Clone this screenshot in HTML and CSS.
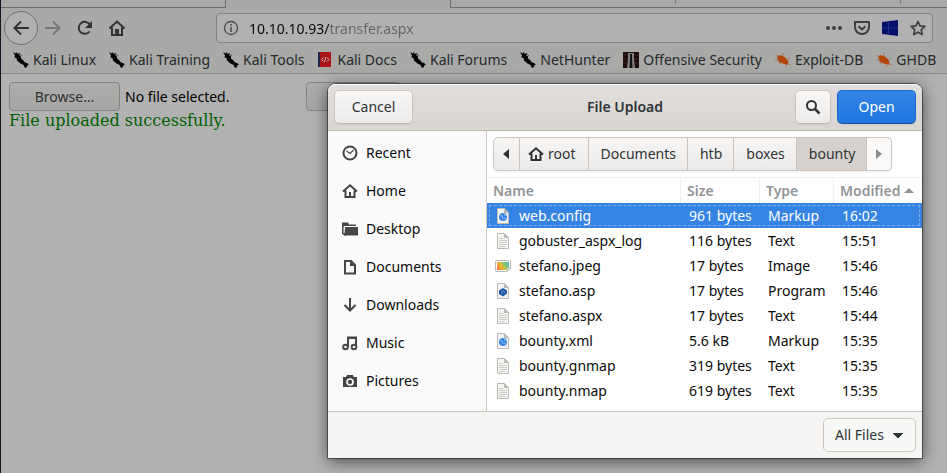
FILE: index.html
```html
<!DOCTYPE html>
<html lang="en">
<head>
<meta charset="utf-8">
<title>File Upload</title>
<link rel="stylesheet" href="styles.css">
</head>
<body>
<svg class="sprite" aria-hidden="true">
  <symbol id="kali" viewBox="0 0 16 16"><path d="M0 0l2.500 1.500L4 0l.5 2L7 1 6 3l2 1.500v2L10 8l2 2.500 2 .5 2 1.500-1.500.5-.5 2-2 1-1.500-3-3-1.500L4 8.500 3.500 6 1.500 5.500 2 3.500z" fill="#050505"/><path d="M6 1.500l3 2.500" stroke="#050505" stroke-width=".6"/></symbol>
  <symbol id="docs" viewBox="0 0 16 16"><path d="M1 0h13v15H1z" fill="#aa1518"/><path d="M1 0h2v15H1z" fill="#1d2448"/><path d="M6.500 5.500L4.500 7.500l2 2M10 5.500l2 2-2 2M9 5l-1.500 5" fill="none" stroke="#c5b5b5"/></symbol>
  <symbol id="offsec" viewBox="0 0 16 16"><path d="M0 0h16v16H0z" fill="#1d0c0c"/><path d="M0 3h16M0 7h16M0 11h16" stroke="#3d2020"/><path d="M5 1h6v6l1 9H4l1-9z" fill="#858080"/><path d="M7 2h2v5l.5 9h-3L7 7z" fill="#151515"/></symbol>
  <symbol id="bug" viewBox="0 0 16 16"><path d="M1 3l4 3M0 8l5 0M4 12l3-3M8 1v5M10 13l1 2M13 7l2-1M14 12l2 1" stroke="#a06a45" stroke-width=".7" fill="none"/><path d="M2 5l2-2 4 1 4 3 1.500 3-.5 3-4-1-5-2z" fill="#b2460b"/></symbol>
  <symbol id="house" viewBox="0 0 16 16"><path d="M1 8.500L8 2.300l7 6.200M3.500 7.500V14h9V7.500" fill="none" stroke="currentColor" stroke-width="2"/><path d="M7 9h2v5H7z" fill="currentColor"/></symbol>
  <symbol id="text" viewBox="0 0 16 16"><path d="M2.500.500h7l4 4v11h-11z" fill="#f4f4f2" stroke="#bcbab5"/><path d="M9 0l5 5H9z" fill="#bcbab5"/><path d="M4 5.500h4M4 7.500h8M4 9.500h8M4 11.500h8M4 13.500h6" stroke="#cfcdc9"/></symbol>
  <symbol id="markup" viewBox="0 0 16 16"><path d="M2.500.500h7l4 4v11h-11z" fill="#f4f4f2" stroke="#bcbab5"/><path d="M9 0l5 5H9z" fill="#bcbab5"/><circle cx="8" cy="9" r="4" fill="#3584e4"/><path d="M5 7l2 1 1 3M9 5.500l1 2 2 0M9 10l2 1" fill="none" stroke="#8fc0f5"/></symbol>
  <symbol id="program" viewBox="0 0 16 16"><path d="M2.500.500h7l4 4v11h-11z" fill="#f4f4f2" stroke="#bcbab5"/><path d="M9 0l5 5H9z" fill="#bcbab5"/><path d="M8 5l4 2.500v3L8 13.500 4 11V7.500z" fill="#1c56a5"/><path d="M6 8l2 3M8 7l2 3" stroke="#6d9ddb"/></symbol>
  <symbol id="image" viewBox="0 0 16 16"><defs><linearGradient id="photo" x1="0" y1="0.700" x2="1" y2="0.300"><stop offset="0" stop-color="#f5793b"/><stop offset=".35" stop-color="#f3b62e"/><stop offset=".7" stop-color="#86c96a"/><stop offset="1" stop-color="#4fb8b8"/></linearGradient></defs><path d="M1.500 2.500h13a1 1 0 011 1V10l-3.500 3.500H1.500a1 1 0 01-1-1v-9a1 1 0 011-1z" fill="#fff" stroke="#bcbab5"/><path d="M2 4h12v6l-2.500 2H2z" fill="url(#photo)"/><path d="M12 13.500V10h3.500z" fill="#eee" stroke="#bcbab5"/></symbol>
</svg>

<div class="browser">
  <div class="tabs"><span class="tab tab-first"></span><span class="tab tab-active"></span><span class="tab tab-mid"></span><span class="tab tab-mid"></span><span class="tab tab-rest"></span></div>
  <nav class="toolbar">
    <button class="back" aria-label="Back"><svg viewBox="0 0 16 16"><path d="M16 8H2M8 1.500L1.500 8 8 14.500" fill="none" stroke="#303336" stroke-width="2"/></svg></button>
    <button class="tool" aria-label="Forward"><svg viewBox="0 0 16 16"><path d="M0 8h14M8 1.500L14.500 8 8 14.500" fill="none" stroke="#777" stroke-width="2"/></svg></button>
    <button class="tool" aria-label="Reload"><svg viewBox="0 0 16 16"><path d="M12.500 11.500A6 6 0 1113 5" fill="none" stroke="#303336" stroke-width="2"/><path d="M15 1v7H8z" fill="#303336"/></svg></button>
    <button class="tool" aria-label="Home page"><svg viewBox="0 0 16 16"><path d="M0.500 8.500L8 1.500l7.500 7M3 7.500V15h10V7.500" fill="none" stroke="#303336" stroke-width="2"/><path d="M6 9h4v5H6z" fill="#303336"/></svg></button>
    <div class="address">
      <svg viewBox="0 0 16 16"><circle cx="8" cy="8" r="6.500" fill="none" stroke="#4b4b4b" stroke-width="1.300"/><path d="M7.200 7h1.600v5H7.200zM7.200 4h1.600v1.700H7.200z" fill="#4b4b4b"/></svg>
      <input class="url" type="text" aria-label="Address" value="10.10.10.93/transfer.aspx">
      <div class="actions">
        <svg viewBox="0 0 16 16"><g fill="#3f3f3f"><circle cx="2" cy="8" r="2"/><circle cx="8" cy="8" r="2"/><circle cx="14" cy="8" r="2"/></g></svg>
        <svg viewBox="0 0 16 16"><path d="M1 2h14v5a7 7 0 01-14 0z" fill="none" stroke="#3f3f3f" stroke-width="2" stroke-linejoin="round"/><path d="M4.500 6.200L8 9.500l3.500-3.300" fill="none" stroke="#3f3f3f" stroke-width="2"/></svg>
        <svg viewBox="0 0 16 16"><path d="M0 2l16-2v16L0 14z" fill="#05106c"/><path d="M6.500 1v14M0 8h16" stroke="#39458e" stroke-width=".6"/></svg>
        <svg viewBox="0 0 16 16"><path d="M8 1.500l2 4.300 4.800.6-3.500 3.300.9 4.800L8 12.200l-4.200 2.300.9-4.800L1.200 6.400 6 5.800z" fill="none" stroke="#3f3f3f" stroke-width="1.700" stroke-linejoin="round"/></svg>
      </div>
    </div>
  </nav>
  <div class="bookmarks">
    <a href="#"><svg><use href="#kali"/></svg>Kali Linux</a>
    <a href="#"><svg><use href="#kali"/></svg>Kali Training</a>
    <a href="#"><svg><use href="#kali"/></svg>Kali Tools</a>
    <a href="#"><svg><use href="#docs"/></svg>Kali Docs</a>
    <a href="#"><svg><use href="#kali"/></svg>Kali Forums</a>
    <a href="#"><svg><use href="#kali"/></svg>NetHunter</a>
    <a href="#"><svg><use href="#offsec"/></svg>Offensive Security</a>
    <a href="#"><svg><use href="#bug"/></svg>Exploit-DB</a>
    <a href="#"><svg><use href="#bug"/></svg>GHDB</a>
  </div>
  <main class="page">
    <form class="upload"><button type="button" class="browse">Browse…</button><span class="chosen">No file selected.</span><button type="button" class="send" aria-label="Upload"></button></form>
    <p class="result">File uploaded successfully.</p>
  </main>
</div>

<section class="dialog" role="dialog" aria-labelledby="title">
  <header class="head">
    <div class="side"><button class="btn cancel">Cancel</button></div>
    <h1 id="title">File Upload</h1>
    <div class="side end">
      <button class="btn search" aria-label="Search"><svg viewBox="0 0 16 16"><circle cx="6.500" cy="6.500" r="4.500" fill="none" stroke="#2e3436" stroke-width="2"/><path d="M10 10l4.500 4.500" stroke="#2e3436" stroke-width="2.500"/></svg></button>
      <button class="btn open">Open</button>
    </div>
  </header>
  <div class="body">
    <nav class="places">
      <a href="#"><svg viewBox="0 0 16 16"><circle cx="8" cy="8" r="6.500" fill="none" stroke="currentColor" stroke-width="2"/><path d="M4.500 6L8 8.500 11.500 5" fill="none" stroke="currentColor" stroke-width="1.200"/></svg>Recent</a>
      <a href="#"><svg><use href="#house"/></svg>Home</a>
      <a href="#"><svg viewBox="0 0 16 16"><path d="M0 1.500h6l1 2h7V5H2.500L1.500 6v7H0z" fill="currentColor"/><path d="M3 6h13v8.500H2.500z" fill="currentColor"/><path d="M0 12l2 2.500h2V12z" fill="currentColor"/></svg>Desktop</a>
      <a href="#"><svg viewBox="0 0 16 16"><path d="M3 2h6l4 4v8.500H3z" fill="none" stroke="currentColor" stroke-width="2"/><path d="M8 2v5h5z" fill="currentColor"/></svg>Documents</a>
      <a href="#"><svg viewBox="0 0 16 16"><path d="M8 1v12M2.500 8L8 13.500 13.500 8" fill="none" stroke="currentColor" stroke-width="2"/></svg>Downloads</a>
      <a href="#"><svg viewBox="0 0 16 16"><path d="M6 12V2.500h8V11" fill="none" stroke="currentColor" stroke-width="2"/><path d="M5 2h10v2H5z" fill="currentColor"/><circle cx="3.500" cy="12" r="2.300" fill="none" stroke="currentColor" stroke-width="2"/><circle cx="12" cy="12" r="2.300" fill="none" stroke="currentColor" stroke-width="2"/></svg>Music</a>
      <a href="#"><svg viewBox="0 0 16 16"><path d="M1 4h3l1-2h6l1 2h3v10H1z" fill="currentColor"/><circle cx="8" cy="9" r="3" fill="none" stroke="#fafafa" stroke-width="1.700"/></svg>Pictures</a>
    </nav>
    <div class="files">
      <div class="path">
        <button class="arrow" aria-label="Back"><svg viewBox="0 0 16 16"><path d="M11 3v10L5 8z" fill="#2e3436"/></svg></button>
        <button><svg><use href="#house"/></svg>root</button>
        <button>Documents</button>
        <button>htb</button>
        <button>boxes</button>
        <button class="current">bounty</button>
        <button class="arrow off" aria-label="Forward"><svg viewBox="0 0 16 16"><path d="M5 3v10l6-5z" fill="#8b8e8f"/></svg></button>
      </div>
      <table>
        <colgroup><col><col class="c-size"><col class="c-type"><col class="c-time"></colgroup>
        <thead><tr><th>Name</th><th>Size</th><th>Type</th><th>Modified<svg class="sort" viewBox="0 0 10 5"><path d="M0 5l5-5 5 5z" fill="#929595"/></svg></th></tr></thead>
        <tbody>
          <tr class="selected"><td><svg><use href="#markup"/></svg>web.config</td><td>961 bytes</td><td>Markup</td><td>16:02</td></tr>
          <tr><td><svg><use href="#text"/></svg>gobuster_aspx_log</td><td>116 bytes</td><td>Text</td><td>15:51</td></tr>
          <tr><td><svg><use href="#image"/></svg>stefano.jpeg</td><td>17 bytes</td><td>Image</td><td>15:46</td></tr>
          <tr><td><svg><use href="#program"/></svg>stefano.asp</td><td>17 bytes</td><td>Program</td><td>15:46</td></tr>
          <tr><td><svg><use href="#text"/></svg>stefano.aspx</td><td>17 bytes</td><td>Text</td><td>15:44</td></tr>
          <tr><td><svg><use href="#markup"/></svg>bounty.xml</td><td>5.6 kB</td><td>Markup</td><td>15:35</td></tr>
          <tr><td><svg><use href="#text"/></svg>bounty.gnmap</td><td>319 bytes</td><td>Text</td><td>15:35</td></tr>
          <tr><td><svg><use href="#text"/></svg>bounty.nmap</td><td>619 bytes</td><td>Text</td><td>15:35</td></tr>
        </tbody>
      </table>
    </div>
  </div>
  <footer class="foot"><select class="filter" aria-label="File type"><option>All Files</option></select></footer>
</section>
</body>
</html>
```
FILE: styles.css
```css
* { box-sizing: border-box; }
body, button, input, select { font: 14px/20px "Noto Sans", "Open Sans", sans-serif; }
body { margin: 0; height: 100vh; overflow: hidden; background: #b1b1b1; color: #000; }
button { margin: 0; padding: 0; color: #2e3436; }
a { color: inherit; text-decoration: none; }
svg { width: 16px; height: 16px; flex: none; }
.sprite { position: absolute; width: 0; height: 0; }

.browser { min-height: 100vh; border-left: 1px solid #10151f; }
.tabs { display: flex; height: 8px; background: #a9a9a7; }
.tab { border-bottom: 1px solid #6b6c6c; }
.tab-first { width: 225px; border-right: 1px solid #6b6c6c; }
.tab-active { width: 225px; border-right: 1px solid #6b6c6c; border-bottom: 0; }
.tab-mid { width: 225px; background: linear-gradient(#7c7c7c, #7c7c7c) right top / 1px 4px no-repeat; }
.tab-rest { flex: 1; }
.toolbar { display: flex; align-items: center; height: 42px; padding: 0 14px 2px 3px; background: #a9a9a8; }
.back { display: flex; align-items: center; justify-content: center; width: 34px; height: 34px; border: 1px solid #717171; border-radius: 50%; background: #b0b0b0; margin-right: 7px; }
.tool { display: flex; padding: 0; border: 0; background: none; margin-right: 16px; }
.tool:nth-of-type(4) { margin-right: 91px; }
.address { display: flex; align-items: center; flex: 1; height: 30px; padding: 0 6px; border: 1px solid #858585; border-radius: 4px; background: #b1b1b1; }
.url { flex: 1; min-width: 0; height: 24px; margin-left: 10px; padding: 0; border: 0; color: transparent; background: linear-gradient(90deg, #080808 80px, #656565 80px); -webkit-background-clip: text; background-clip: text; }
.actions { display: flex; gap: 12px; }
.bookmarks { display: flex; gap: 13px; height: 24px; padding-left: 12px; overflow: hidden; background: #a9a9a8; border-bottom: 1px solid #838383; color: #25292b; white-space: nowrap; }
.bookmarks a { display: flex; align-items: center; gap: 4px; height: 20px; }
.page { padding: 8px; }
.upload { display: flex; align-items: center; }
.browse, .send { height: 29px; border: 1px solid #858481; border-radius: 4px; background: linear-gradient(#aeadac, #a7a6a4); }
.browse { width: 111px; margin-right: 5px; }
.chosen { width: 181px; }
.send { width: 95px; }
.result { margin: 0; font: 16px/19px "DejaVu Serif", serif; color: #006100; }

.dialog { position: absolute; top: 84px; left: 328px; right: 25px; border-radius: 8px 8px 0 0; background: #f6f5f4; box-shadow: 0 0 0 1px rgba(0,0,0,.45), 0 3px 16px rgba(0,0,0,.6); color: #0b0b0b; }
.head { display: flex; align-items: center; height: 47px; padding: 0 6px; border-bottom: 1px solid #bfb8b1; border-radius: 8px 8px 0 0; background: linear-gradient(#e1dedb, #dad6d2); box-shadow: inset 0 1px #fbfafa; }
.head h1 { margin: 0; font-size: 14px; line-height: 20px; font-weight: 600; color: #2e3436; }
.side { display: flex; flex: 1; gap: 6px; }
.end { justify-content: flex-end; }
.btn { display: flex; align-items: center; justify-content: center; height: 34px; border: 1px solid #cdc7c2; border-bottom-color: #bfb8b1; border-radius: 5px; background: linear-gradient(#f8f7f6, #edebe9); box-shadow: 0 1px 2px rgba(0,0,0,.07); }
.cancel { width: 79px; }
.search { width: 36px; }
.open { width: 79px; border-color: #1b6acb #1b6acb #15539e; color: #fff; background: linear-gradient(#3584e4, #1f76e1); }
.body { display: flex; height: 281px; border-bottom: 1px solid #c9c5be; }
.places { width: 159px; padding-top: 3px; background: #fafafa; border-right: 1px solid #cdc7c2; }
.places a { display: flex; align-items: center; gap: 8px; height: 38px; padding-left: 14px; }
.places svg { color: #464646; }
.files { flex: 1; min-width: 0; background: #fff; }
.path { display: flex; height: 47px; padding: 6px 6px; border-bottom: 1px solid #f0f0ef; }
.path button { display: flex; align-items: center; gap: 4px; height: 34px; padding: 0 11px 0 12px; border: 1px solid #cdc7c2; border-left-width: 0; background: linear-gradient(#f7f6f5, #eceae8); box-shadow: 0 1px 2px rgba(0,0,0,.07); }
.path button:nth-child(2) { padding: 0 12px 0 8px; }
.path .arrow { width: 25px; padding: 0 4px; }
.path .arrow:first-child { width: 27px; border-left-width: 1px; border-radius: 5px 0 0 5px; }
.path .arrow:last-child { border-radius: 0 5px 5px 0; }
.path .current { background: #d6d1cd; }
.path .off { background: #faf9f8; }
table { width: 100%; border-collapse: separate; border-spacing: 0; table-layout: fixed; }
.c-size { width: 79px; }
.c-type { width: 74px; }
.c-time { width: 88px; }
th { height: 25px; padding: 0 0 0 6px; border-right: 1px solid #f0f0ef; text-align: left; font-weight: 600; color: #929595; white-space: nowrap; }
th:last-child { border-right: 0; }
.sort { width: 10px; height: 5px; margin-left: 4px; vertical-align: 3px; }
td { height: 25px; padding: 0 0 0 8px; white-space: nowrap; }
td svg { margin-right: 8px; vertical-align: -3px; }
.selected { color: #fff; background: #3584e4; outline: 1px dashed #78adec; outline-offset: -3px; }
.foot { display: flex; align-items: center; justify-content: flex-end; height: 46px; padding: 0 6px; }
.filter { width: 93px; height: 34px; padding: 0 11px; border: 1px solid #cdc7c2; border-radius: 5px; appearance: none; color: #2e3436; background: conic-gradient(from 315deg at 50% 100%, #2e3436 90deg, transparent 0) right 12px center / 10px 5px no-repeat, #f8f8f7; }
```
